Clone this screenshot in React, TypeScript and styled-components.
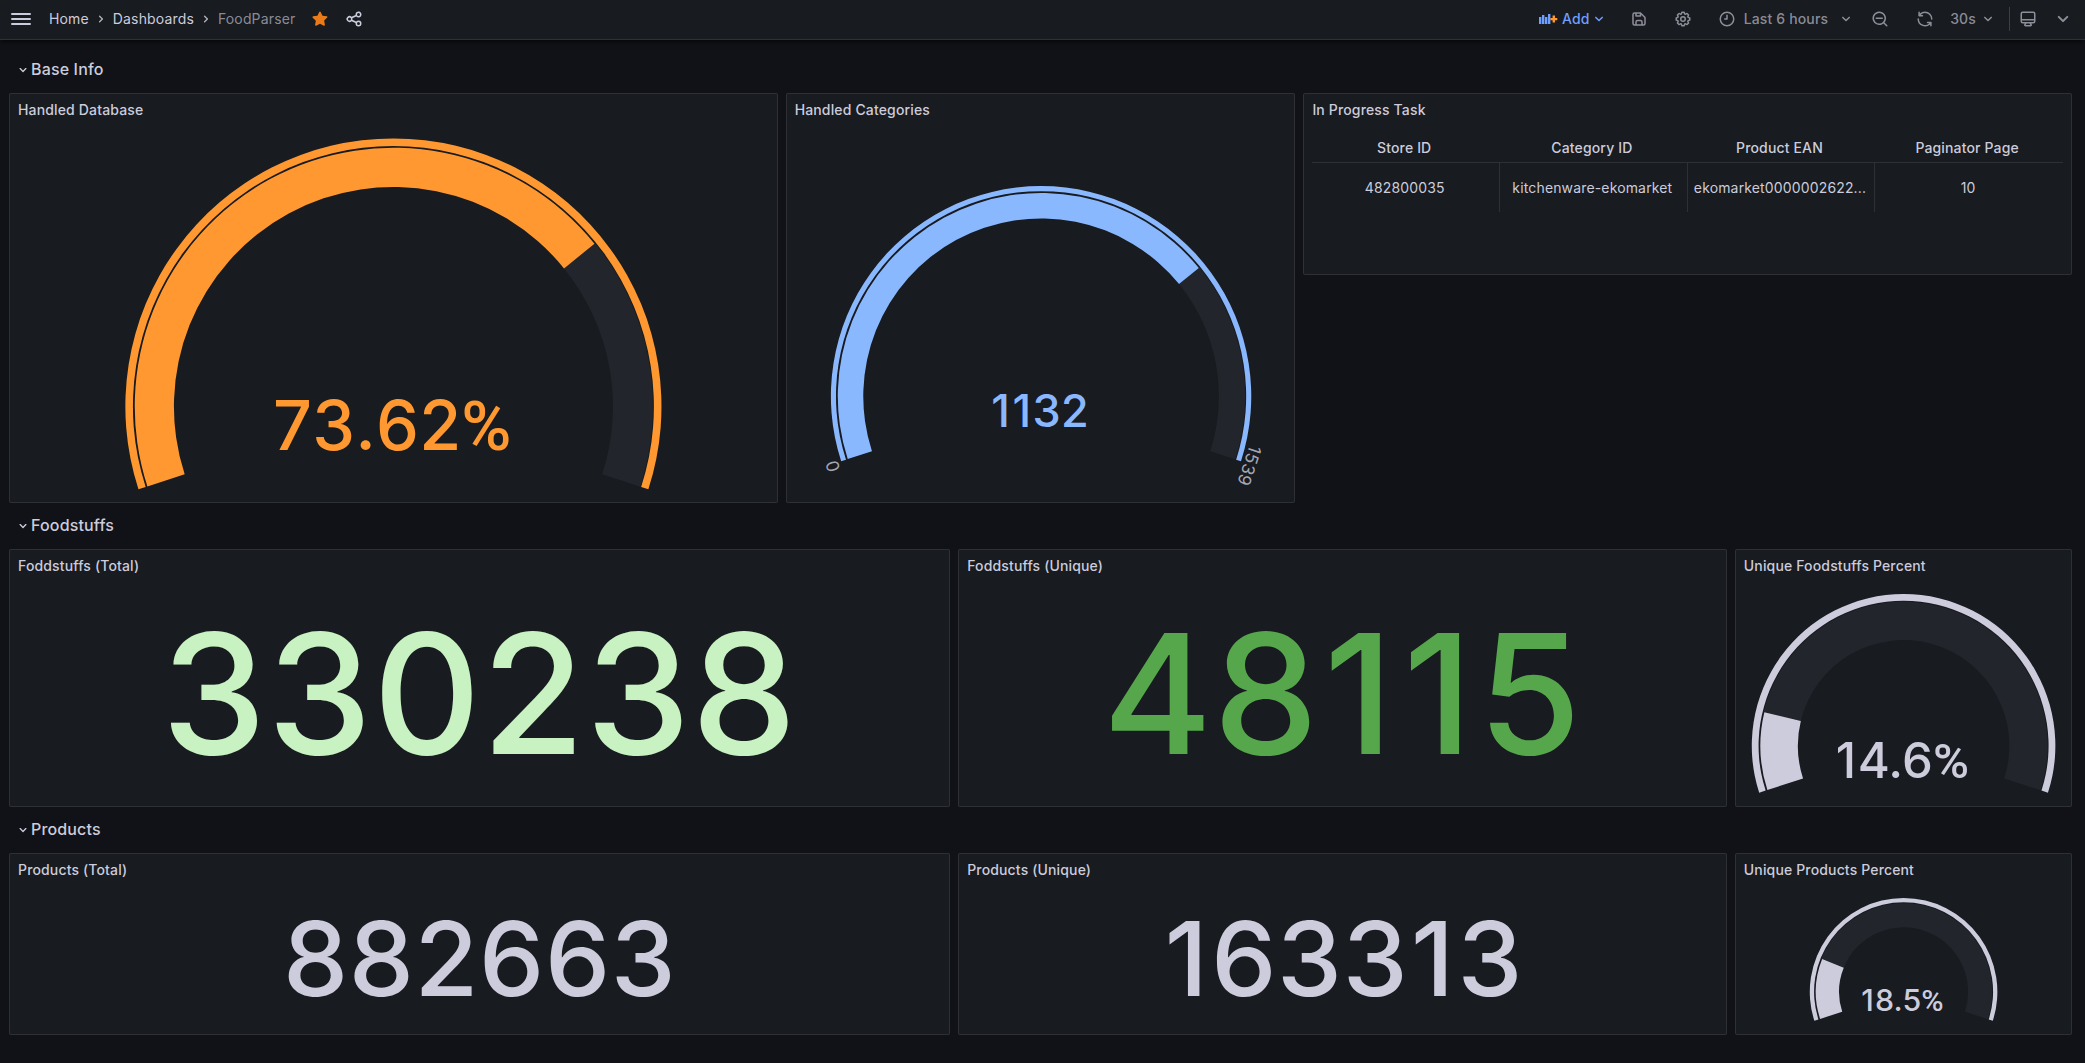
import React from "react";
import styled, { createGlobalStyle } from "styled-components";

const color = {
  canvas: "#111217",
  panel: "#181b1f",
  track: "#22252b",
  border: "rgba(204, 204, 220, 0.12)",
  text: "rgb(204, 204, 220)",
  muted: "rgba(204, 204, 220, 0.65)",
  soft: "rgba(204, 204, 220, 0.85)",
  link: "#6e9fff",
  orange: "#ff9830",
  blue: "#8ab8ff",
  paleGreen: "#c8f2c2",
  green: "#56a64b",
};

const GlobalStyle = createGlobalStyle`
  * { box-sizing: border-box; }
  body {
    margin: 0;
    background: ${color.canvas};
    color: ${color.text};
    font-family: Inter, "Liberation Sans", sans-serif;
    font-size: 14px;
    line-height: 22px;
    letter-spacing: 0.15px;
  }
`;

const icons = {
  bars: "M3,8H21a1,1,0,0,0,0-2H3A1,1,0,0,0,3,8Zm18,8H3a1,1,0,0,0,0,2H21a1,1,0,0,0,0-2Zm0-5H3a1,1,0,0,0,0,2H21a1,1,0,0,0,0-2Z",
  angleDown:
    "M17,9.17a1,1,0,0,0-1.41,0L12,12.71,8.46,9.17a1,1,0,0,0-1.41,0,1,1,0,0,0,0,1.42l4.24,4.24a1,1,0,0,0,1.42,0L17,10.59A1,1,0,0,0,17,9.17Z",
  angleRight:
    "M14.83,11.29,10.59,7.05a1,1,0,0,0-1.42,0,1,1,0,0,0,0,1.41L12.71,12,9.17,15.54a1,1,0,0,0,0,1.41,1,1,0,0,0,.71.29,1,1,0,0,0,.71-.29l4.24-4.24A1,1,0,0,0,14.83,11.29Z",
  star: "M17.56,21a1,1,0,0,1-.46-.11L12,18.22l-5.1,2.67a1,1,0,0,1-1.45-1.06l1-5.63L2.28,10.2a1,1,0,0,1,.55-1.71l5.7-.83,2.51-5.13a1,1,0,0,1,1.8,0l2.54,5.12,5.7.83a1,1,0,0,1,.81.68,1,1,0,0,1-.26,1l-4.12,4,1,5.63a1,1,0,0,1-.4,1A1,1,0,0,1,17.56,21Z",
  share:
    "M18,14a4,4,0,0,0-3.08,1.48l-5.1-2.35a3.64,3.64,0,0,0,0-2.26l5.1-2.35A4,4,0,1,0,14,6a4.17,4.17,0,0,0,.07.71L8.79,9.14a4,4,0,1,0,0,5.72l5.28,2.43A4.17,4.17,0,0,0,14,18a4,4,0,1,0,4-4ZM18,4a2,2,0,1,1-2,2A2,2,0,0,1,18,4ZM6,14a2,2,0,1,1,2-2A2,2,0,0,1,6,14Zm12,6a2,2,0,1,1,2-2A2,2,0,0,1,18,20Z",
  save: "m20.71 9.29-6-6a1 1 0 0 0-.32-.21A1.09 1.09 0 0 0 14 3H6a3 3 0 0 0-3 3v12a3 3 0 0 0 3 3h12a3 3 0 0 0 3-3v-8a1 1 0 0 0-.29-.71ZM9 5h4v2H9Zm6 14H9v-3a1 1 0 0 1 1-1h4a1 1 0 0 1 1 1Zm4-1a1 1 0 0 1-1 1h-1v-3a3 3 0 0 0-3-3h-4a3 3 0 0 0-3 3v3H6a1 1 0 0 1-1-1V6a1 1 0 0 1 1-1h1v3a1 1 0 0 0 1 1h6a1 1 0 0 0 1-1V6.41l4 4Z",
  cog: "M21.32,9.55l-1.89-.63.89-1.78A1,1,0,0,0,20.13,6L18,3.87a1,1,0,0,0-1.15-.19l-1.78.89-.63-1.89A1,1,0,0,0,13.5,2h-3a1,1,0,0,0-.95.68L8.92,4.57,7.14,3.68A1,1,0,0,0,6,3.87L3.87,6a1,1,0,0,0-.19,1.15l.89,1.78-1.89.63A1,1,0,0,0,2,10.5v3a1,1,0,0,0,.68.95l1.89.63-.89,1.78A1,1,0,0,0,3.87,18L6,20.13a1,1,0,0,0,1.15.19l1.78-.89.63,1.89a1,1,0,0,0,.95.68h3a1,1,0,0,0,.95-.68l.63-1.89,1.78.89A1,1,0,0,0,18,20.13L20.13,18a1,1,0,0,0,.19-1.15l-.89-1.78,1.89-.63A1,1,0,0,0,22,13.5v-3A1,1,0,0,0,21.32,9.55ZM20,12.78l-1.2.4A2,2,0,0,0,17.64,16l.57,1.14-1.1,1.1L16,17.64a2,2,0,0,0-2.79,1.16l-.4,1.2H11.22l-.4-1.2A2,2,0,0,0,8,17.64l-1.14.57-1.1-1.1L6.36,16A2,2,0,0,0,5.2,13.18L4,12.78V11.22l1.2-.4A2,2,0,0,0,6.36,8L5.79,6.89l1.1-1.1L8,6.36A2,2,0,0,0,10.82,5.2l.4-1.2h1.56l.4,1.2A2,2,0,0,0,16,6.36l1.14-.57,1.1,1.1L17.64,8a2,2,0,0,0,1.16,2.79l1.2.4ZM12,8a4,4,0,1,0,4,4A4,4,0,0,0,12,8Zm0,6a2,2,0,1,1,2-2A2,2,0,0,1,12,14Z",
  clock:
    "M12,2A10,10,0,1,0,22,12,10,10,0,0,0,12,2Zm0,18a8,8,0,1,1,8-8A8,8,0,0,1,12,20ZM12,6a1,1,0,0,0-1,1v4H9a1,1,0,0,0,0,2h3a1,1,0,0,0,1-1V7A1,1,0,0,0,12,6Z",
  searchMinus:
    "M15,10H7a1,1,0,0,0,0,2h8a1,1,0,0,0,0-2Zm6.71,10.29L18,16.61A9,9,0,1,0,16.61,18l3.68,3.68a1,1,0,0,0,1.42,0A1,1,0,0,0,21.71,20.29ZM11,18a7,7,0,1,1,7-7A7,7,0,0,1,11,18Z",
  sync: "M19.91,15.51H15.38a1,1,0,0,0,0,2h2.4A8,8,0,0,1,4,12a1,1,0,1,0-2,0,10,10,0,0,0,16.88,7.23V21a1,1,0,0,0,2,0V16.5A1,1,0,0,0,19.91,15.51ZM12,2A10,10,0,0,0,5.12,4.77V3a1,1,0,0,0-2,0V7.5a1,1,0,0,0,1,1h4.5a1,1,0,0,0,0-2H6.22A8,8,0,0,1,20,12a1,1,0,0,0,2,0A10,10,0,0,0,12,2Z",
  monitor:
    "M19,2H5A3,3,0,0,0,2,5V15a3,3,0,0,0,3,3H7.64l-.58,1a2,2,0,0,0,0,2,2,2,0,0,0,1.75,1h6.46A2,2,0,0,0,17,21a2,2,0,0,0,0-2l-.59-1H19a3,3,0,0,0,3-3V5A3,3,0,0,0,19,2ZM8.77,20,10,18H14l1.2,2ZM20,15a1,1,0,0,1-1,1H5a1,1,0,0,1-1-1V14H20Zm0-3H4V5A1,1,0,0,1,5,4H19a1,1,0,0,1,1,1Z",
};

const Svg = styled.svg`
  display: block;
  flex: none;
  fill: currentColor;
`;

function Icon({ name, size = 18 }: { name: keyof typeof icons; size?: number }) {
  return (
    <Svg width={size} height={size} viewBox="0 0 24 24">
      <path d={icons[name]} />
    </Svg>
  );
}

function AddPanelIcon() {
  return (
    <Svg width="19" height="12" viewBox="0 0 19 12">
      <g fill={color.link}>
        <rect x="0" y="4" width="2.4" height="7" />
        <rect x="3" y="2" width="2.4" height="9" />
        <rect x="6" y="4" width="2.4" height="7" />
        <rect x="9" y="1" width="2.4" height="10" />
      </g>
      <path d="M13.6 2.6H16v2.3h2.3v2.4H16v2.3h-2.4V7.3h-2.2V4.9h2.2z" fill={color.orange} />
    </Svg>
  );
}

const TopBar = styled.header`
  display: flex;
  align-items: center;
  justify-content: space-between;
  height: 40px;
  padding: 0 10px 1px 9px;
  background: ${color.panel};
  border-bottom: 1px solid ${color.border};
  box-shadow: 0 1px 6px rgba(0, 0, 0, 0.8);
`;

const Breadcrumbs = styled.nav`
  display: flex;
  align-items: center;
`;

const MenuButton = styled.button`
  display: flex;
  padding: 0;
  border: 0;
  background: none;
  color: ${color.text};
`;

const Crumb = styled.span<{ $current?: boolean }>`
  color: ${(p) => (p.$current ? color.muted : color.text)};
`;

const CrumbList = styled.div`
  display: flex;
  align-items: center;
  gap: 4px;
  margin-left: 16px;
`;

const Separator = styled.span`
  display: flex;
  color: ${color.soft};
`;

const Marks = styled.div`
  display: flex;
  align-items: center;
  gap: 16px;
  margin-left: 16px;
`;

const Star = styled.span`
  display: flex;
  color: #eb7b18;
`;

const Tools = styled.div`
  display: flex;
  align-items: center;
  color: ${color.muted};
  font-weight: 500;
`;

const Tool = styled.button<{ $before?: number; $accent?: boolean }>`
  display: flex;
  align-items: center;
  margin: 0 0 0 ${(p) => p.$before ?? 0}px;
  padding: 0;
  border: 0;
  background: none;
  font: inherit;
  letter-spacing: inherit;
  color: ${(p) => (p.$accent ? color.link : "inherit")};
`;

const ToolLabel = styled.span<{ $left?: number; $right?: number }>`
  padding: 0 ${(p) => p.$right ?? 0}px 0 ${(p) => p.$left ?? 0}px;
`;

const Divider = styled.span`
  width: 1px;
  height: 24px;
  margin: 0 9px 0 12px;
  background: rgba(204, 204, 220, 0.2);
`;

const Grid = styled.main`
  display: grid;
  grid-template-columns: repeat(24, minmax(0, 1fr));
  grid-auto-rows: 30px;
  gap: 8px;
  padding: 15px 13px 0 9px;
`;

const RowTitle = styled.h2`
  grid-column: 1 / -1;
  display: flex;
  align-items: center;
  margin: 0;
  padding: 0 0 3px 6px;
  font-size: 16px;
  font-weight: 500;
`;

const RowArrow = styled.span`
  padding-top: 2px;
`;

const PanelBox = styled.section<{ $cols: number; $rows: number }>`
  grid-column: span ${(p) => p.$cols};
  grid-row: span ${(p) => p.$rows};
  display: flex;
  flex-direction: column;
  min-width: 0;
  overflow: hidden;
  background: ${color.panel};
  border: 1px solid ${color.border};
  border-radius: 2px;
`;

const PanelTitle = styled.h3`
  flex: none;
  margin: 0;
  padding: 0 8px;
  font-size: 14px;
  font-weight: 500;
  line-height: 32px;
`;

const PanelBody = styled.div`
  flex: 1;
  display: flex;
  justify-content: center;
  align-items: center;
  min-height: 0;
`;

const StatText = styled.div<{ $size: number; $color: string }>`
  padding-bottom: 2px;
  font-size: ${(p) => p.$size}px;
  font-weight: 500;
  line-height: 1.2;
  letter-spacing: 0.006em;
  color: ${(p) => p.$color};
`;

// The narrow "1" gets a little air on both sides in large numbers.
const ONE_PAD = 0.027;

const One = styled.span`
  margin: 0 ${ONE_PAD}em;
`;

function Stat({ size, tint, value }: { size: number; tint: string; value: string }) {
  return (
    <StatText $size={size} $color={tint}>
      {value.split("").map((ch, i) => (ch === "1" ? <One key={i}>1</One> : ch))}
    </StatText>
  );
}

const GaugeSvg = styled.svg`
  flex: 1;
  align-self: stretch;
  display: block;
  width: 100%;
`;

const GaugeValue = styled.text`
  font-weight: 500;
  text-anchor: middle;
`;

const Percent = styled.tspan`
  font-family: Roboto, sans-serif;
`;

const GaugeLabel = styled.text`
  font-size: 17.5px;
  letter-spacing: 0.5px;
  fill: rgba(204, 204, 220, 0.8);
  text-anchor: middle;
  dominant-baseline: central;
`;

type GaugeSpec = {
  width: number;
  height: number;
  cx: number;
  cy: number;
  ring: [number, number];
  bar: [number, number];
  ratio: number;
  value: string;
  size: number;
  baseline: number;
  tint: string;
  limits?: [string, string];
};

const SWEEP = 216;

function point(cx: number, cy: number, r: number, deg: number) {
  const a = (deg * Math.PI) / 180;
  return `${(cx + r * Math.cos(a)).toFixed(2)} ${(cy + r * Math.sin(a)).toFixed(2)}`;
}

// An annular sector that runs clockwise between two fractions of the sweep.
function sector(cx: number, cy: number, outer: number, inner: number, from: number, to: number) {
  const a = 162 + SWEEP * from;
  const b = 162 + SWEEP * to;
  const large = b - a > 180 ? 1 : 0;
  return [
    `M${point(cx, cy, outer, a)}`,
    `A${outer} ${outer} 0 ${large} 1 ${point(cx, cy, outer, b)}`,
    `L${point(cx, cy, inner, b)}`,
    `A${inner} ${inner} 0 ${large} 0 ${point(cx, cy, inner, a)}Z`,
  ].join("");
}

function Gauge(g: GaugeSpec) {
  const { cx, cy } = g;
  const labelRadius = g.ring[0] + 9.7;
  return (
    <GaugeSvg viewBox={`0 0 ${g.width} ${g.height}`}>
      <path d={sector(cx, cy, g.bar[0] + 0.8, g.bar[1], g.ratio, 1)} fill={color.track} />
      <path d={sector(cx, cy, g.bar[0], g.bar[1], 0, g.ratio)} fill={g.tint} />
      <path d={sector(cx, cy, g.ring[0], g.ring[1], 0, 1)} fill={g.tint} />
      <GaugeValue x={cx - 1} y={g.baseline} fontSize={g.size} fill={g.tint}>
        {g.value.split("").map((ch, i) => {
          const ones = (ch === "1" ? 1 : 0) + (g.value[i - 1] === "1" ? 1 : 0);
          const dx = i === 0 ? 0 : ones * ONE_PAD * g.size;
          return ch === "%" ? (
            <Percent key={i} dx={dx}>
              %
            </Percent>
          ) : (
            <tspan key={i} dx={dx}>
              {ch}
            </tspan>
          );
        })}
      </GaugeValue>
      {g.limits?.map((label, i) => {
        const deg = i === 0 ? 161.5 : 378.5;
        const [x, y] = point(cx, cy, labelRadius, deg).split(" ");
        return (
          <GaugeLabel key={label} transform={`translate(${x} ${y}) rotate(${deg + 90})`}>
            {label}
          </GaugeLabel>
        );
      })}
    </GaugeSvg>
  );
}

function Panel(props: {
  title: string;
  cols: number;
  rows: number;
  children: React.ReactNode;
}) {
  return (
    <PanelBox $cols={props.cols} $rows={props.rows}>
      <PanelTitle>{props.title}</PanelTitle>
      <PanelBody>{props.children}</PanelBody>
    </PanelBox>
  );
}

const Table = styled.div`
  align-self: stretch;
  flex: 1;
  min-width: 0;
  padding: 8px 8px 0 8px;
`;

const TableRow = styled.div<{ $head?: boolean }>`
  display: grid;
  grid-template-columns: repeat(4, minmax(0, 1fr));
  height: ${(p) => (p.$head ? 29 : 49)}px;
  border-bottom: ${(p) => (p.$head ? `1px solid ${color.border}` : "0")};
`;

const HeadCell = styled.div`
  padding: 3px 10px 0 6px;
  text-align: center;
  font-weight: 500;
`;

const Cell = styled.div`
  padding: 0 7px 0 5px;
  border-right: 1px solid ${color.border};
  line-height: 49px;
  text-align: center;
  white-space: nowrap;
  overflow: hidden;
  text-overflow: ellipsis;
  &:last-child {
    border-right: 0;
  }
`;

const heads = ["Store ID", "Category ID", "Product EAN", "Paginator Page"];
const cells = ["482800035", "kitchenware-ekomarket", "ekomarket0000002622...", "10"];

function SectionTitle({ children }: { children: React.ReactNode }) {
  return (
    <RowTitle>
      <RowArrow>
        <Icon name="angleDown" size={16} />
      </RowArrow>
      {children}
    </RowTitle>
  );
}

export default function App() {
  return (
    <>
      <GlobalStyle />
      <TopBar>
        <Breadcrumbs>
          <MenuButton>
            <Icon name="bars" size={24} />
          </MenuButton>
          <CrumbList>
            <Crumb>Home</Crumb>
            <Separator>
              <Icon name="angleRight" size={16} />
            </Separator>
            <Crumb>Dashboards</Crumb>
            <Separator>
              <Icon name="angleRight" size={16} />
            </Separator>
            <Crumb $current>FoodParser</Crumb>
          </CrumbList>
          <Marks>
            <Star>
              <Icon name="star" />
            </Star>
            <Icon name="share" />
          </Marks>
        </Breadcrumbs>
        <Tools>
          <Tool $accent>
            <AddPanelIcon />
            <ToolLabel $left={4}>Add</ToolLabel>
            <Icon name="angleDown" />
          </Tool>
          <Tool $before={22}>
            <Icon name="save" />
          </Tool>
          <Tool $before={26}>
            <Icon name="cog" />
          </Tool>
          <Tool $before={26}>
            <Icon name="clock" />
            <ToolLabel $left={8} $right={9}>
              Last 6 hours
            </ToolLabel>
            <Icon name="angleDown" />
          </Tool>
          <Tool $before={16}>
            <Icon name="searchMinus" />
          </Tool>
          <Tool $before={27}>
            <Icon name="sync" />
          </Tool>
          <Tool $before={16}>
            <ToolLabel $right={3}>30s</ToolLabel>
            <Icon name="angleDown" />
          </Tool>
          <Divider />
          <Tool>
            <Icon name="monitor" />
          </Tool>
          <Tool $before={14}>
            <Icon name="angleDown" size={24} />
          </Tool>
        </Tools>
      </TopBar>
      <Grid>
        <SectionTitle>Base Info</SectionTitle>
        <Panel title="Handled Database" cols={9} rows={11}>
          <Gauge
            width={767}
            height={376}
            cx={383.6}
            cy={280.5}
            ring={[268.2, 260.6]}
            bar={[258.8, 219.6]}
            ratio={0.7362}
            value="73.62%"
            size={68.3}
            baseline={324}
            tint={color.orange}
          />
        </Panel>
        <Panel title="Handled Categories" cols={6} rows={11}>
          <Gauge
            width={508}
            height={376}
            cx={254.2}
            cy={270.3}
            ring={[210.3, 205.2]}
            bar={[203.4, 177.9]}
            ratio={0.7356}
            value="1132"
            size={45}
            baseline={300.7}
            tint={color.blue}
            limits={["0", "1539"]}
          />
        </Panel>
        <Panel title="In Progress Task" cols={9} rows={5}>
          <Table>
            <TableRow $head>
              {heads.map((h) => (
                <HeadCell key={h}>{h}</HeadCell>
              ))}
            </TableRow>
            <TableRow>
              {cells.map((c) => (
                <Cell key={c}>{c}</Cell>
              ))}
            </TableRow>
          </Table>
        </Panel>

        <SectionTitle>Foodstuffs</SectionTitle>
        <Panel title="Foddstuffs (Total)" cols={11} rows={7}>
          <Stat size={167} tint={color.paleGreen} value="330238" />
        </Panel>
        <Panel title="Foddstuffs (Unique)" cols={9} rows={7}>
          <Stat size={167} tint={color.green} value="48115" />
        </Panel>
        <Panel title="Unique Foodstuffs Percent" cols={4} rows={7}>
          <Gauge
            width={335}
            height={224}
            cx={167.5}
            cy={163.8}
            ring={[151.8, 145]}
            bar={[143.2, 105.7]}
            ratio={0.146}
            value="14.6%"
            size={49}
            baseline={196}
            tint={color.text}
          />
        </Panel>

        <SectionTitle>Products</SectionTitle>
        <Panel title="Products (Total)" cols={11} rows={5}>
          <Stat size={103.6} tint={color.text} value="882663" />
        </Panel>
        <Panel title="Products (Unique)" cols={9} rows={5}>
          <Stat size={103.6} tint={color.text} value="163313" />
        </Panel>
        <Panel title="Unique Products Percent" cols={4} rows={5}>
          <Gauge
            width={335}
            height={148}
            cx={167.5}
            cy={105.8}
            ring={[93.8, 89.5]}
            bar={[87.8, 64.5]}
            ratio={0.185}
            value="18.5%"
            size={30.3}
            baseline={125}
            tint={color.text}
          />
        </Panel>
      </Grid>
    </>
  );
}
